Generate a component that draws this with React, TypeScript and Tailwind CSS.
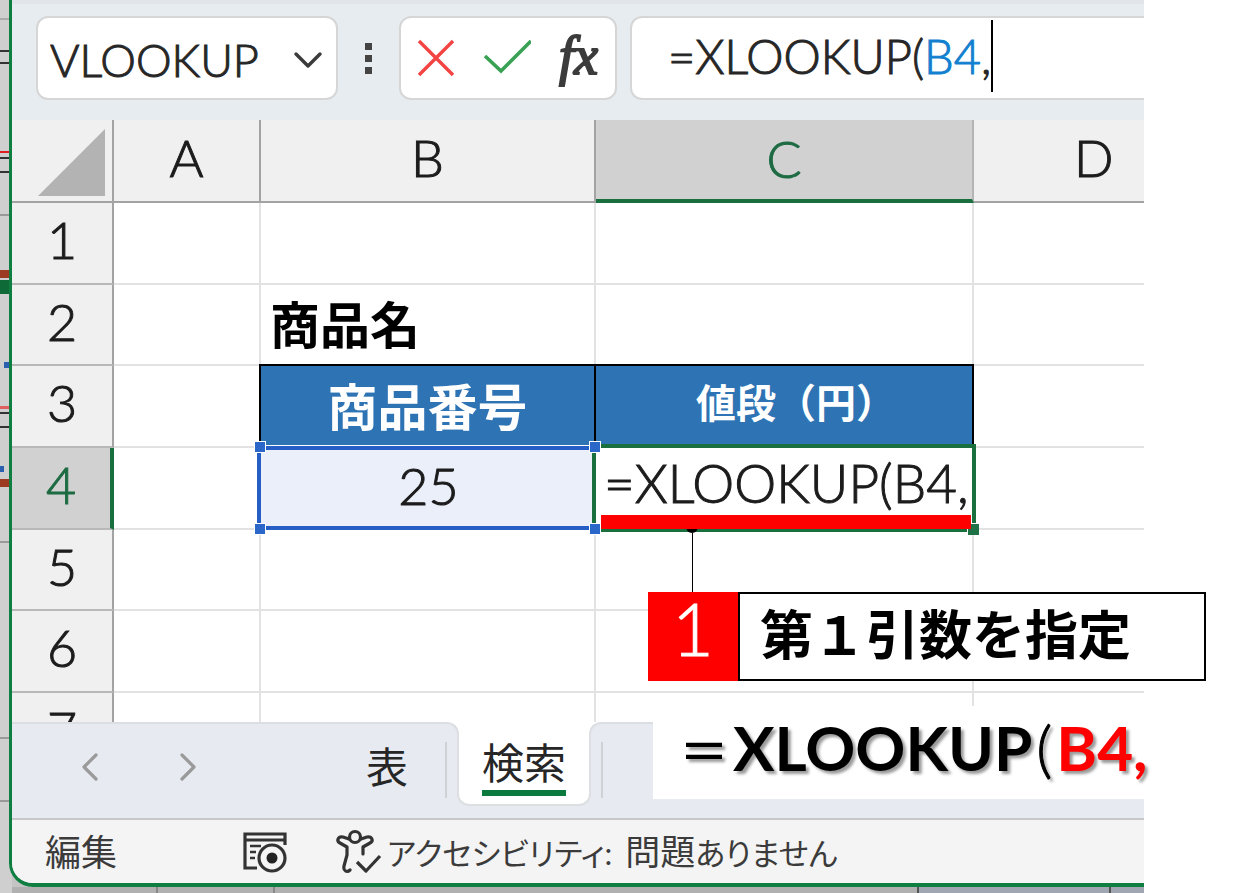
import { ChevronDown, ChevronLeft, ChevronRight } from 'lucide-react'

const rows = [
  { no: 1, height: 'h-[82px]' },
  { no: 2, height: 'h-[81px]' },
  { no: 3, height: 'h-[82px]' },
  { no: 4, height: 'h-[82px]' },
  { no: 5, height: 'h-[81px]' },
  { no: 6, height: 'h-[82px]' },
]

const thin = 'font-light [-webkit-text-stroke:1px_currentColor]'
const cell = 'relative p-0 border-r-2 border-b-2 border-[#e2e2e2]'
const headCell = `p-0 pb-2 border-r-2 border-b-2 border-[#a3a3a3] bg-[#f0f0f0] text-[52px] leading-none ${thin}`

const RangeHandle = ({ className }: { className: string }) => (
  <span className={`absolute z-20 size-3 border border-white bg-[#2b66c9] ${className}`} />
)

const FormulaBar = () => (
  <div className="flex border-t-4 border-[#e1e4e8] bg-[#e7ecf1] pt-3 pb-5 pl-6">
    {/* Name box */}
    <div className="flex h-[84px] w-[302px] shrink-0 items-center rounded-xl border-2 border-[#d6d6d6] bg-white pl-3">
      <input
        aria-label="Name box"
        defaultValue="VLOOKUP"
        className={`h-full w-[234px] bg-transparent pt-1 text-[45px] text-[#262626] outline-none ${thin}`}
      />
      <button aria-label="Open name list" className="flex h-full items-center pt-1">
        <ChevronDown className="h-12 w-12 text-[#3b3b3b]" strokeWidth={1.7} />
      </button>
    </div>

    <div className="flex w-[61px] shrink-0 flex-col items-center justify-center gap-[5px]">
      <span className="size-[7px] bg-[#444]" />
      <span className="size-[7px] bg-[#444]" />
      <span className="size-[7px] bg-[#444]" />
    </div>

    {/* Cancel, enter, insert function */}
    <div className="flex h-[84px] w-[218px] shrink-0 items-center rounded-xl border-2 border-[#d6d6d6] bg-white">
      <button aria-label="Cancel" className="ml-4">
        <svg width="40" height="40" viewBox="0 0 40 40" fill="none" stroke="#f44343" strokeWidth="3.4">
          <path d="M2 3 L36 37 M36 3 L2 37" />
        </svg>
      </button>
      <button aria-label="Enter" className="ml-6">
        <svg width="50" height="40" viewBox="0 0 50 40" fill="none" stroke="#38a152" strokeWidth="3.6">
          <path d="M4 18 L20 33 L50 3" />
        </svg>
      </button>
      <button
        aria-label="Insert function"
        className="ml-7 pb-1 font-['Liberation_Serif'] text-[54px] leading-none text-[#3b3b3b] italic [-webkit-text-stroke:2px_currentColor]"
      >
        fx
      </button>
    </div>

    {/* Formula */}
    <div className="ml-[13px] flex h-[84px] min-w-0 flex-1 items-center rounded-l-xl border-2 border-r-0 border-[#d6d6d6] bg-white pl-9">
      <div
        role="textbox"
        aria-label="Formula"
        className={`flex items-center pb-1 text-[47px] leading-none whitespace-nowrap text-[#262626] ${thin}`}
      >
        <span>=XLOOKUP(</span>
        <span className="text-[#1180d0]">B4</span>
        <span>,</span>
        <span className="h-[72px] w-[2px] bg-black" />
      </div>
    </div>
  </div>
)

const Sheet = () => (
  <table className="w-full table-fixed border-separate border-spacing-0 bg-white text-[#1c1c1c]">
    <colgroup>
      <col className="w-[102px]" />
      <col className="w-[147px]" />
      <col className="w-[335px]" />
      <col className="w-[378px]" />
      <col />
    </colgroup>
    <thead>
      <tr className="h-[83px]">
        <th className="border-r-2 border-b-2 border-[#a3a3a3] bg-[#f0f0f0] p-0">
          <svg className="mt-1 ml-[26px]" width="68" height="68" viewBox="0 0 68 68">
            <path d="M67 0 V67 H0 Z" fill="#b3b3b3" />
          </svg>
        </th>
        <th className={headCell}>A</th>
        <th className={headCell}>B</th>
        <th className={`border-r-2 border-b-4 border-[#b4b4b4] border-b-[#1a6f3f] bg-[#d1d1d1] p-0 pb-1 text-[52px] leading-none text-[#1d6b43] ${thin}`}>
          C
        </th>
        <th className={`border-b-2 border-[#a3a3a3] bg-[#f0f0f0] p-0 pb-2 pl-[100px] text-left text-[52px] leading-none ${thin}`}>
          D
        </th>
      </tr>
    </thead>
    <tbody>
      {rows.map(({ no, height }) => (
        <tr key={no} className={height}>
          {no === 4 ? (
            <th className={`border-r-4 border-b-2 border-[#b8b8b8] border-r-[#1a6f3f] bg-[#d1d1d1] p-0 pb-2 text-[52px] leading-none text-[#1d6b43] ${thin}`}>
              {no}
            </th>
          ) : (
            <th className={`border-r-2 border-b-2 border-[#b8b8b8] border-r-[#a3a3a3] bg-[#f0f0f0] p-0 pb-2 text-[52px] leading-none ${thin}`}>
              {no}
            </th>
          )}
          <td className={cell} />
          {no === 3 ? (
            <>
              <td className="relative border-r-2 border-black bg-[#2e74b5] p-0 text-center text-[50px] leading-none font-bold text-white">
                <span className="absolute -top-[2px] -left-[2px] h-[82px] w-[337px] border-t-2 border-l-2 border-black" />
                商品番号
              </td>
              <td className="relative border-r-2 border-black bg-[#2e74b5] p-0 pb-2 pl-6 text-center text-[40px] leading-none font-bold text-white">
                <span className="absolute -top-[2px] left-0 h-[2px] w-[378px] bg-black" />
                値段（円）
              </td>
            </>
          ) : no === 4 ? (
            <>
              <td className={`relative bg-[#eaeff9] p-0 pb-2 text-center text-[52px] leading-none ${thin}`}>
                <span className="absolute -top-[2px] -right-0 bottom-0 -left-[4px] z-10 border-4 border-[#255fc5] outline-1 outline-white" />
                25
                <RangeHandle className="-top-[7px] -left-[7px]" />
                <RangeHandle className="-bottom-[5px] -left-[7px]" />
                <RangeHandle className="-top-[7px] -right-[5px]" />
                <RangeHandle className="-right-[5px] -bottom-[5px]" />
              </td>
              <td className="relative p-0 pb-3">
                <span className="absolute -top-[4px] -right-[2px] -bottom-[2px] -left-[4px] z-10 border-4 border-[#1a6f3f]" />
                <span className="absolute -right-[5px] -bottom-[5px] z-20 size-3 border-t border-l border-white bg-[#1f7245]" />
                <input
                  aria-label="C4"
                  defaultValue="=XLOOKUP(B4,"
                  className={`relative z-10 block h-[68px] w-full bg-transparent pl-2 text-[53px] outline-none ${thin}`}
                />
              </td>
            </>
          ) : (
            <>
              <td className={`${cell} pl-[9px] text-[50px] leading-none font-bold text-black`}>
                {no === 2 && '商品名'}
              </td>
              <td className={cell} />
            </>
          )}
          <td className="border-b-2 border-[#e2e2e2] p-0" />
        </tr>
      ))}
      <tr>
        <th className={`border-r-2 border-[#a3a3a3] bg-[#f0f0f0] p-0 text-[52px] leading-none ${thin}`}>
          <div className="h-[29px] overflow-hidden pt-[10px]">7</div>
        </th>
        <td className="border-r-2 border-[#e2e2e2]" />
        <td className="border-r-2 border-[#e2e2e2]" />
        <td className="border-r-2 border-[#e2e2e2]" />
        <td />
      </tr>
    </tbody>
  </table>
)

const SheetTabs = () => (
  <div className="flex h-[96px] border-t-2 border-[#dcdfe2] bg-[#e7ebf1] text-[42px] leading-none text-[#262626]">
    <div className="flex w-[433px] shrink-0 items-center pb-2">
      <button aria-label="Previous sheet" className="ml-[54px]">
        <ChevronLeft className="size-12 text-[#9a9a9a]" strokeWidth={1.6} />
      </button>
      <button aria-label="Next sheet" className="ml-[50px]">
        <ChevronRight className="size-12 text-[#9a9a9a]" strokeWidth={1.6} />
      </button>
      <button className="ml-auto pr-[37px]">表</button>
    </div>
    <span className="mt-[18px] h-14 w-[2px] shrink-0 bg-[#cfd1d4]" />
    <button className="relative -mt-[2px] ml-[10px] h-[84px] w-[134px] shrink-0 rounded-b-xl border-2 border-t-0 border-[#dcdfe2] bg-white">
      <span className="absolute top-0 -left-[12px] size-3 bg-white">
        <span className="block size-full rounded-tr-xl border-t-2 border-r-2 border-[#dcdfe2] bg-[#e7ebf1]" />
      </span>
      <span className="absolute top-0 -right-[12px] size-3 bg-white">
        <span className="block size-full rounded-tl-xl border-t-2 border-l-2 border-[#dcdfe2] bg-[#e7ebf1]" />
      </span>
      <span className="mx-auto block w-[84px] border-b-[6px] border-[#0b7a3e] pt-3 pb-[6px]">検索</span>
    </button>
    <span className="mt-[18px] ml-[10px] h-14 w-[2px] shrink-0 bg-[#cfd1d4]" />
  </div>
)

const StatusBar = () => (
  <div className="flex h-[65px] items-center border-t-2 border-[#c8c8c8] bg-[#f4f4f4] pl-[33px] text-[36px] leading-none whitespace-nowrap text-[#3b3b3b]">
    <span>編集</span>
    <button aria-label="Record macro" className="ml-[126px]">
      <svg width="44" height="42" viewBox="0 0 44 42" fill="none" stroke="#333" strokeWidth="3.2">
        <path d="M14 37 H2 V3 H42 V14 M2 9 H42" />
        <path d="M7 15 H18 M7 21 H13 M7 27 H12" strokeWidth="2.6" />
        <circle cx="29" cy="27" r="13" />
        <circle cx="29" cy="27" r="5.5" fill="#222" stroke="none" />
      </svg>
    </button>
    <button className="ml-12 flex items-center">
      <svg width="48" height="46" viewBox="0 0 48 46" fill="none" stroke="#333" strokeWidth="3.2" strokeLinecap="round" strokeLinejoin="round">
        <circle cx="20" cy="8" r="5.5" />
        <path d="M14 10 L8 8 C3 7 1 12 5 14 L12 18 V26 L9 37 C8 42 12 44 15 41" />
        <path d="M26 10 L32 8 C37 7 39 12 35 14 L28 18 V25" />
        <path d="M22 33 L31 42 L45 27" strokeLinecap="butt" />
      </svg>
      <span className="ml-1 text-[31px] [font-feature-settings:'palt']">
        アクセシビリティ:<span className="ml-1 text-[35px]"> 問題</span>ありません
      </span>
    </button>
  </div>
)

// Slivers of the windows that lie behind the workbook
const Backdrop = () => (
  <div className="absolute inset-y-0 left-0 flex w-3 flex-col bg-[#cfcfcf]">
    <span className="mt-[18px] h-[2px] bg-[#aaa]" />
    <span className="mt-[30px] h-[2px] bg-[#333]" />
    <span className="mt-[10px] h-[2px] bg-[#333]" />
    <span className="mt-[87px] h-[2px] bg-[#e02020]" />
    <span className="mt-[4px] h-[2px] bg-[#333]" />
    <span className="mt-[12px] h-[2px] bg-[#333]" />
    <span className="mt-[41px] h-[2px] bg-[#999]" />
    <span className="mt-[54px] h-2 bg-[#9c3a22]" />
    <span className="mt-[2px] h-[14px] bg-[#0e6b38]" />
    <span className="mt-[68px] ml-1 h-[6px] bg-[#2b5fb0]" />
    <span className="mt-[38px] h-[3px] bg-[#e06060]" />
    <span className="mt-[3px] h-[2px] bg-[#333]" />
    <span className="mt-[12px] h-[2px] bg-[#333]" />
    <span className="mt-[38px] mr-2 h-[6px] bg-[#2b5fb0]" />
    <span className="mt-[7px] h-2 bg-[#9c3a22]" />
    <span className="mt-[54px] h-[2px] bg-[#999]" />
    <span className="mt-[194px] h-[2px] bg-[#999]" />
    <span className="mt-[61px] h-[2px] bg-[#999]" />
  </div>
)

const App = () => {
  return (
    <div className="relative overflow-hidden bg-white pr-24 font-['Lato','Noto_Sans_CJK_JP',sans-serif]">
      <div className="relative bg-[#c4c4c4] pl-[9px]">
        <Backdrop />
        <div className="relative overflow-hidden rounded-bl-[24px] border-b-4 border-l-[3px] border-[#0f7f41]">
          <FormulaBar />
          <Sheet />
          <SheetTabs />
          <StatusBar />
        </div>
        <div className="flex h-[6px] bg-[#b0b0b0]">
          <span className="ml-[147px] w-[2px] bg-[#888]" />
          <span className="ml-[115px] w-[2px] bg-[#888]" />
          <span className="ml-[642px] w-[2px] bg-[#555]" />
          <span className="w-[190px] bg-[#a0a7b2]" />
          <span className="w-[2px] bg-[#555]" />
          <span className="flex-1 bg-[#a0a7b2]" />
        </div>
      </div>

      {/* Underline and leader */}
      <div className="absolute top-[515px] left-[601px] z-20 w-[370px]">
        <div className="relative z-10 h-[14px] bg-[#ff0000]" />
        <div className="-mt-2 ml-[85px] h-3 w-3 rounded-full bg-black" />
        <div className="ml-[91px] h-[60px] w-px bg-black" />
      </div>

      {/* Callout */}
      <div className="absolute top-[592px] left-[648px] z-20 flex h-[89px] w-[558px]">
        <div className={`flex w-[90px] justify-center bg-[#ff0000] text-[72px] leading-none text-white ${thin}`}>1</div>
        <div className="flex-1 border-2 border-black bg-white pt-[14px] pl-5 text-[53px] leading-none font-bold whitespace-nowrap text-black">
          第１引数を指定
        </div>
      </div>

      {/* Formula so far */}
      <div className="absolute top-[706px] left-[653px] z-20 flex h-[93px] w-[500px] items-center bg-white pb-3 pl-[26px] text-[62px] leading-none font-bold whitespace-nowrap text-black [text-shadow:3px_3px_3px_rgba(0,0,0,0.4)]">
        <span className="mr-1 pt-2 text-[50px] font-medium">＝</span>
        <span>XLOOKUP</span>
        <span className={`mx-1 ${thin}`}>(</span>
        <span className="text-[#ff0000]">B4,</span>
      </div>
    </div>
  )
}

export default App
